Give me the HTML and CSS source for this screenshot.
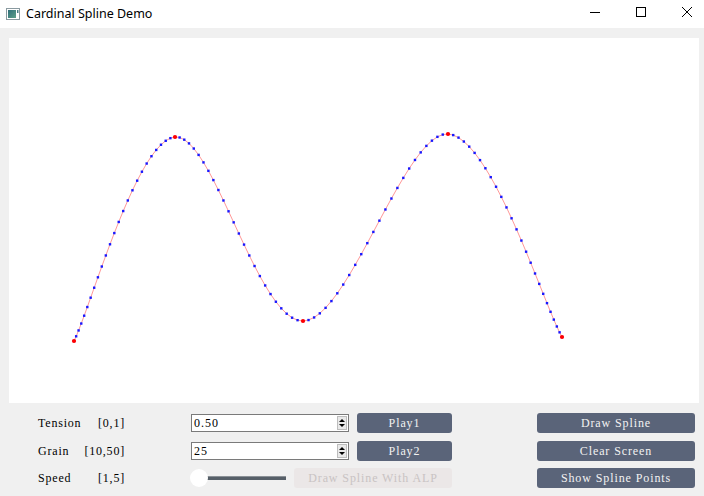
FILE: index.html
```html
<!DOCTYPE html>
<html>
<head>
<meta charset="utf-8">
<title>Cardinal Spline Demo</title>
<link rel="stylesheet" href="styles.css">
</head>
<body>
<div class="window">
  <div class="titlebar">
    <svg class="app-icon" width="14" height="12" viewBox="0 0 14 12">
      <defs>
        <linearGradient id="ig" x1="0" y1="0" x2="1" y2="1">
          <stop offset="0" stop-color="#2f6f7a"/>
          <stop offset="1" stop-color="#5fa08a"/>
        </linearGradient>
      </defs>
      <rect x="0.5" y="0.5" width="13" height="11" fill="#fff" stroke="#8a9aa0"/>
      <rect x="2" y="2" width="8" height="8" fill="url(#ig)"/>
      <rect x="11" y="2" width="1.5" height="3" fill="#4a7f86"/>
    </svg>
    <span class="title">Cardinal Spline Demo</span>
    <div class="caption-buttons">
      <div class="cap-btn"><svg width="12" height="12" viewBox="0 0 12 12"><line x1="1" y1="6.5" x2="11" y2="6.5" stroke="#000" stroke-width="1"/></svg></div>
      <div class="cap-btn"><svg width="12" height="12" viewBox="0 0 12 12"><rect x="1.5" y="1.5" width="9" height="9" fill="none" stroke="#000" stroke-width="1"/></svg></div>
      <div class="cap-btn"><svg width="12" height="12" viewBox="0 0 12 12"><path d="M1 1 L11 11 M11 1 L1 11" stroke="#000" stroke-width="1"/></svg></div>
    </div>
  </div>
  <div class="content">
    <div class="canvas">
      <svg id="plot" width="690" height="365" viewBox="0 0 690 365"></svg>
    </div>
    <div class="controls">
      <div class="row">
        <div class="label"><span>Tension</span><span>[0,1]</span></div>
        <div class="mid">
          <div class="spin"><span class="spin-text">0.50</span><div class="arrows"><span class="up"></span><span class="down"></span></div></div>
          <button class="btn small">Play1</button>
        </div>
        <button class="btn wide">Draw Spline</button>
      </div>
      <div class="row">
        <div class="label"><span>Grain</span><span>[10,50]</span></div>
        <div class="mid">
          <div class="spin"><span class="spin-text">25</span><div class="arrows"><span class="up"></span><span class="down"></span></div></div>
          <button class="btn small">Play2</button>
        </div>
        <button class="btn wide">Clear Screen</button>
      </div>
      <div class="row">
        <div class="label"><span>Speed</span><span>[1,5]</span></div>
        <div class="mid">
          <div class="slider"><span class="handle"></span><span class="track"></span></div>
          <button class="btn disabled">Draw Spline With ALP</button>
        </div>
        <button class="btn wide">Show Spline Points</button>
      </div>
    </div>
  </div>
</div>
<script src="script.js"></script>
</body>
</html>
```
FILE: styles.css
```css
html, body {
  margin: 0;
  padding: 0;
}
body {
  width: 704px;
  height: 496px;
  background: #f0f0f0;
  overflow: hidden;
  font-family: "Liberation Serif", "DejaVu Serif", serif;
}
.window {
  width: 704px;
  height: 496px;
  display: flex;
  flex-direction: column;
  overflow: hidden;
}
.titlebar {
  height: 28px;
  background: #ffffff;
  display: flex;
  align-items: center;
  padding-left: 6px;
  box-sizing: border-box;
}
.app-icon {
  flex: none;
}
.title {
  margin-left: 6px;
  font-family: "Noto Sans", "Liberation Sans", sans-serif;
  font-size: 12.5px;
  color: #000;
  margin-top: -1px;
}
.caption-buttons {
  margin-left: auto;
  margin-right: -6px;
  display: flex;
  height: 28px;
}
.cap-btn {
  width: 46px;
  height: 28px;
  display: flex;
  align-items: center;
  justify-content: center;
}
.cap-btn svg {
  margin-top: -4px;
}
.content {
  padding: 10px 5px 0 9px;
  flex: 1;
  display: flex;
  flex-direction: column;
}
.canvas {
  width: 690px;
  height: 365px;
  background: #ffffff;
}
.canvas svg {
  display: block;
}
.controls {
  padding: 10px 0 0 29px;
  display: flex;
  flex-direction: column;
  gap: 7px;
}
.row {
  display: flex;
  align-items: center;
  height: 20px;
}
.row:nth-child(2) {
  margin-top: 1px;
}
.label {
  width: 87px;
  margin-right: 66px;
  display: flex;
  justify-content: space-between;
  font-size: 12px;
  letter-spacing: 0.8px;
  color: #000;
}
.mid {
  width: 261px;
  display: flex;
  align-items: center;
  justify-content: space-between;
  margin-right: 85px;
}
.spin {
  width: 158px;
  height: 18px;
  box-sizing: border-box;
  border: 1px solid #7a7a7a;
  background: #fff;
  display: flex;
  align-items: center;
}
.spin-text {
  padding-left: 2px;
  font-size: 12px;
  letter-spacing: 1px;
  color: #000;
}
.arrows {
  margin-left: auto;
  margin-right: 1px;
  width: 10px;
  height: 14px;
  box-sizing: border-box;
  border: 1px solid #bdbdbd;
  background: #e9e9e9;
  display: flex;
  flex-direction: column;
  align-items: center;
  justify-content: center;
  gap: 2px;
}
.up {
  width: 0;
  height: 0;
  border-left: 3px solid transparent;
  border-right: 3px solid transparent;
  border-bottom: 3px solid #000;
}
.down {
  width: 0;
  height: 0;
  border-left: 3px solid transparent;
  border-right: 3px solid transparent;
  border-top: 3px solid #000;
}
.btn {
  height: 20px;
  border: none;
  border-radius: 3px;
  background: #5a6479;
  color: #f2f2f2;
  font-family: "Liberation Serif", "DejaVu Serif", serif;
  font-size: 12px;
  letter-spacing: 0.9px;
  padding: 0;
  margin: 0;
}
.btn.small {
  width: 95px;
}
.btn.wide {
  width: 158px;
}
.btn.disabled {
  width: 158px;
  background: #ebe7e7;
  color: #c9c3c3;
}
.slider {
  width: 95px;
  height: 20px;
  position: relative;
  display: flex;
  align-items: center;
}
.track {
  margin-left: 15px;
  width: 80px;
  height: 4px;
  background: #565f68;
  border-top: 1px solid #8a9096;
  box-sizing: border-box;
}
.handle {
  position: absolute;
  left: -1px;
  top: 1px;
  width: 18px;
  height: 18px;
  border-radius: 50%;
  background: #ffffff;
}
.slider::before {
  content: "";
  position: absolute;
  left: 0;
  top: 9px;
  width: 2px;
  height: 3px;
  background: #e8a8e8;
}
```
FILE: script.js
```js
(function () {
  var svgNS = "http://www.w3.org/2000/svg";
  var plot = document.getElementById("plot");
  var ox = 9, oy = 38;
  var ctrl = [[74, 341], [175, 137], [303, 321], [448, 134], [562, 337]].map(function (p) {
    return [p[0] - ox, p[1] - oy];
  });
  var grain = 25;
  var s = 0.5;
  var P = [ctrl[0]].concat(ctrl).concat([ctrl[ctrl.length - 1]]);
  var pts = [];
  for (var i = 1; i < P.length - 2; i++) {
    var a = P[i - 1], b = P[i], c = P[i + 1], d = P[i + 2];
    for (var j = 0; j < grain; j++) {
      var u = j / grain, u2 = u * u, u3 = u2 * u;
      var w0 = -s * u3 + 2 * s * u2 - s * u;
      var w1 = (2 - s) * u3 + (s - 3) * u2 + 1;
      var w2 = (s - 2) * u3 + (3 - 2 * s) * u2 + s * u;
      var w3 = s * u3 - s * u2;
      pts.push([
        a[0] * w0 + b[0] * w1 + c[0] * w2 + d[0] * w3,
        a[1] * w0 + b[1] * w1 + c[1] * w2 + d[1] * w3
      ]);
    }
  }
  pts.push(ctrl[ctrl.length - 1]);
  var line = document.createElementNS(svgNS, "polyline");
  line.setAttribute("points", pts.map(function (p) { return p[0].toFixed(2) + "," + p[1].toFixed(2); }).join(" "));
  line.setAttribute("fill", "none");
  line.setAttribute("stroke", "#ff5050");
  line.setAttribute("stroke-width", "0.6");
  plot.appendChild(line);
  pts.forEach(function (p) {
    var r = document.createElementNS(svgNS, "rect");
    r.setAttribute("x", (p[0] - 1.2).toFixed(2));
    r.setAttribute("y", (p[1] - 1.2).toFixed(2));
    r.setAttribute("width", "2.4");
    r.setAttribute("height", "2.4");
    r.setAttribute("fill", "#1818ff");
    plot.appendChild(r);
  });
  ctrl.forEach(function (p) {
    var c = document.createElementNS(svgNS, "circle");
    c.setAttribute("cx", p[0]);
    c.setAttribute("cy", p[1]);
    c.setAttribute("r", "2.1");
    c.setAttribute("fill", "#ff0000");
    plot.appendChild(c);
  });
})();
```
